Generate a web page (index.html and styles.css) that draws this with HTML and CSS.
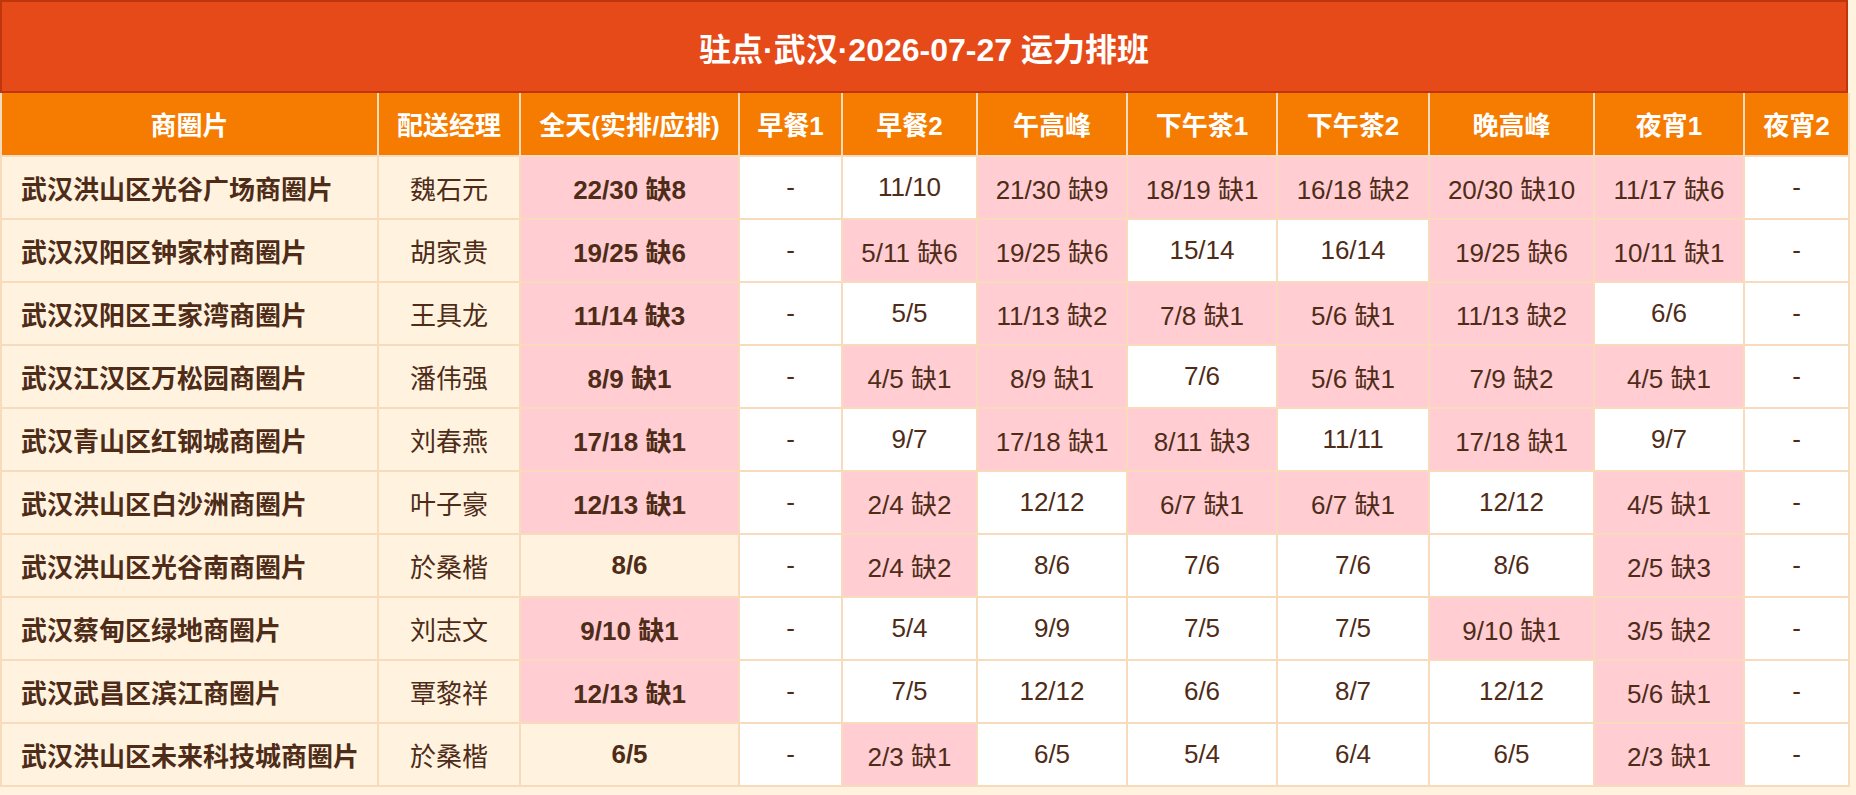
FILE: index.html
```html
<!DOCTYPE html>
<html lang="zh-CN">
<head>
<meta charset="utf-8">
<title>驻点·武汉·2026-07-27 运力排班</title>
<link rel="stylesheet" href="styles.css">
</head>
<body>
<div class="page">
  <div class="title">驻点·武汉·2026-07-27 运力排班</div>
  <table class="sched">
    <colgroup>
      <col class="c-area"><col class="c-mgr"><col class="c-day"><col class="c-b1"><col class="c-b2"><col class="c-lunch"><col class="c-tea1"><col class="c-tea2"><col class="c-dinner"><col class="c-n1"><col class="c-n2">
    </colgroup>
    <thead>
      <tr><th>商圈片</th><th>配送经理</th><th>全天(实排/应排)</th><th>早餐1</th><th>早餐2</th><th>午高峰</th><th>下午茶1</th><th>下午茶2</th><th>晚高峰</th><th>夜宵1</th><th>夜宵2</th></tr>
    </thead>
    <tbody>
      <tr><td class="area">武汉洪山区光谷广场商圈片</td><td class="mgr">魏石元</td><td class="day short">22/30 缺8</td><td>-</td><td>11/10</td><td class="short">21/30 缺9</td><td class="short">18/19 缺1</td><td class="short">16/18 缺2</td><td class="short">20/30 缺10</td><td class="short">11/17 缺6</td><td>-</td></tr>
      <tr><td class="area">武汉汉阳区钟家村商圈片</td><td class="mgr">胡家贵</td><td class="day short">19/25 缺6</td><td>-</td><td class="short">5/11 缺6</td><td class="short">19/25 缺6</td><td>15/14</td><td>16/14</td><td class="short">19/25 缺6</td><td class="short">10/11 缺1</td><td>-</td></tr>
      <tr><td class="area">武汉汉阳区王家湾商圈片</td><td class="mgr">王具龙</td><td class="day short">11/14 缺3</td><td>-</td><td>5/5</td><td class="short">11/13 缺2</td><td class="short">7/8 缺1</td><td class="short">5/6 缺1</td><td class="short">11/13 缺2</td><td>6/6</td><td>-</td></tr>
      <tr><td class="area">武汉江汉区万松园商圈片</td><td class="mgr">潘伟强</td><td class="day short">8/9 缺1</td><td>-</td><td class="short">4/5 缺1</td><td class="short">8/9 缺1</td><td>7/6</td><td class="short">5/6 缺1</td><td class="short">7/9 缺2</td><td class="short">4/5 缺1</td><td>-</td></tr>
      <tr><td class="area">武汉青山区红钢城商圈片</td><td class="mgr">刘春燕</td><td class="day short">17/18 缺1</td><td>-</td><td>9/7</td><td class="short">17/18 缺1</td><td class="short">8/11 缺3</td><td>11/11</td><td class="short">17/18 缺1</td><td>9/7</td><td>-</td></tr>
      <tr><td class="area">武汉洪山区白沙洲商圈片</td><td class="mgr">叶子豪</td><td class="day short">12/13 缺1</td><td>-</td><td class="short">2/4 缺2</td><td>12/12</td><td class="short">6/7 缺1</td><td class="short">6/7 缺1</td><td>12/12</td><td class="short">4/5 缺1</td><td>-</td></tr>
      <tr><td class="area">武汉洪山区光谷南商圈片</td><td class="mgr">於桑楷</td><td class="day">8/6</td><td>-</td><td class="short">2/4 缺2</td><td>8/6</td><td>7/6</td><td>7/6</td><td>8/6</td><td class="short">2/5 缺3</td><td>-</td></tr>
      <tr><td class="area">武汉蔡甸区绿地商圈片</td><td class="mgr">刘志文</td><td class="day short">9/10 缺1</td><td>-</td><td>5/4</td><td>9/9</td><td>7/5</td><td>7/5</td><td class="short">9/10 缺1</td><td class="short">3/5 缺2</td><td>-</td></tr>
      <tr><td class="area">武汉武昌区滨江商圈片</td><td class="mgr">覃黎祥</td><td class="day short">12/13 缺1</td><td>-</td><td>7/5</td><td>12/12</td><td>6/6</td><td>8/7</td><td>12/12</td><td class="short">5/6 缺1</td><td>-</td></tr>
      <tr><td class="area">武汉洪山区未来科技城商圈片</td><td class="mgr">於桑楷</td><td class="day">6/5</td><td>-</td><td class="short">2/3 缺1</td><td>6/5</td><td>5/4</td><td>6/4</td><td>6/5</td><td class="short">2/3 缺1</td><td>-</td></tr>
    </tbody>
  </table>
</div>
</body>
</html>
```

FILE: styles.css
```css
html, body {
  margin: 0;
  padding: 0;
  background: #fff3e0;
}

body {
  font-family: "Liberation Sans", "Noto Sans CJK SC", sans-serif;
  color: #4e2c18;
}

.page {
  margin-right: 8px;
}

.title {
  height: 89px;
  background: #e64a19;
  border: 2px solid #bf360c;
  color: #ffffff;
  font-size: 32px;
  font-weight: bold;
  display: flex;
  align-items: center;
  justify-content: center;
}

.sched {
  width: 100%;
  border-collapse: collapse;
  table-layout: fixed;
  font-size: 26px;
}

.c-area { width: 377px; }
.c-mgr { width: 142px; }
.c-day { width: 219px; }
.c-b1 { width: 103px; }
.c-b2 { width: 135px; }
.c-lunch { width: 150px; }
.c-tea1 { width: 150px; }
.c-tea2 { width: 152px; }
.c-dinner { width: 165px; }
.c-n1 { width: 150px; }
.c-n2 { width: 105px; }

.sched th,
.sched td {
  border: 2px solid #f8dbbc;
  padding: 12px 4px;
  text-align: center;
  vertical-align: middle;
  white-space: nowrap;
  background: #ffffff;
}

.sched th {
  border-top: 0;
  background: #f57c00;
  color: #ffffff;
  font-weight: bold;
  padding: 12px 4px 13px;
}

.sched td.area {
  text-align: left;
  padding-left: 19px;
  font-weight: bold;
  background: #fff3e0;
}

.sched td.mgr {
  background: #fff3e0;
}

.sched td.day {
  font-weight: bold;
  background: #fff3e0;
}

.sched td.short {
  background: #ffcdd2;
}
```
